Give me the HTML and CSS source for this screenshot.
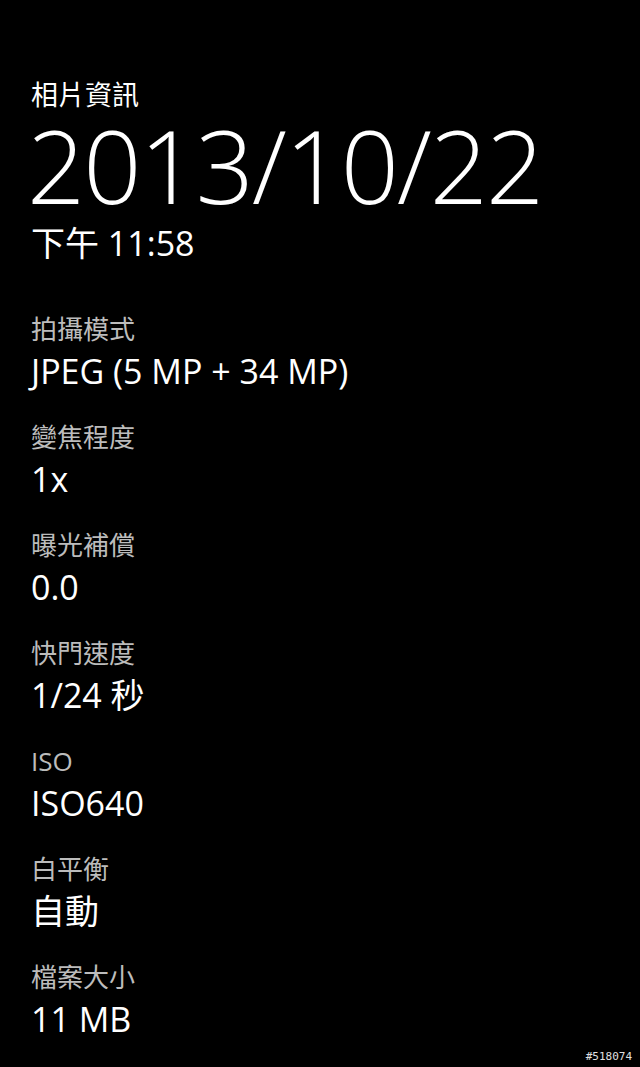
FILE: index.html
```html
<!DOCTYPE html>
<html>
<head>
	<meta charset="utf-8">
	<title>相片資訊</title>
	<link rel="stylesheet" href="styles.css">
</head>

<body>

	<div class="page">
		<div class="title">相片資訊</div>
		<div class="date">2013/10/22</div>
		<div class="time">下午 11:58</div>

		<div class="list">
			<div class="item">
				<div class="label">拍攝模式</div>
				<div class="value">JPEG (5 MP + 34 MP)</div>
			</div>
			<div class="item">
				<div class="label">變焦程度</div>
				<div class="value">1x</div>
			</div>
			<div class="item">
				<div class="label">曝光補償</div>
				<div class="value">0.0</div>
			</div>
			<div class="item">
				<div class="label">快門速度</div>
				<div class="value">1/24 秒</div>
			</div>
			<div class="item">
				<div class="label">ISO</div>
				<div class="value">ISO640</div>
			</div>
			<div class="item">
				<div class="label">白平衡</div>
				<div class="value">自動</div>
			</div>
			<div class="item">
				<div class="label">檔案大小</div>
				<div class="value">11 MB</div>
			</div>
		</div>
	</div>

	<div class="mark">#518074</div>

</body>
</html>
```

FILE: styles.css
```css
body, html {
	height: 100%;
	min-height: 100%;
}

body {
	margin: 0;
	padding: 0;
	background: #000;
	color: #fff;
	font-family: "Open Sans", "Noto Sans CJK TC", sans-serif;
	position: relative;
	overflow: hidden;
}

.page {
	padding: 77px 0 0 31px;
}

.title {
	font-size: 27px;
	line-height: 36px;
}

.date {
	font-size: 102px;
	line-height: 104px;
	font-weight: 300;
	letter-spacing: -2px;
	margin-left: -4px;
	margin-top: 0;
}

.time {
	font-size: 34px;
	line-height: 44px;
	margin-top: 4px;
}

.list {
	margin-top: 46px;
}

.item {
	margin-bottom: 24px;
}

.label {
	font-size: 26px;
	line-height: 36px;
	color: #bcbcbc;
}

.value {
	font-size: 34px;
	line-height: 48px;
}

.mark {
	position: absolute;
	right: 8px;
	bottom: 4px;
	font-family: "DejaVu Sans Mono", monospace;
	font-size: 11px;
	color: #e0e0e0;
}
```
